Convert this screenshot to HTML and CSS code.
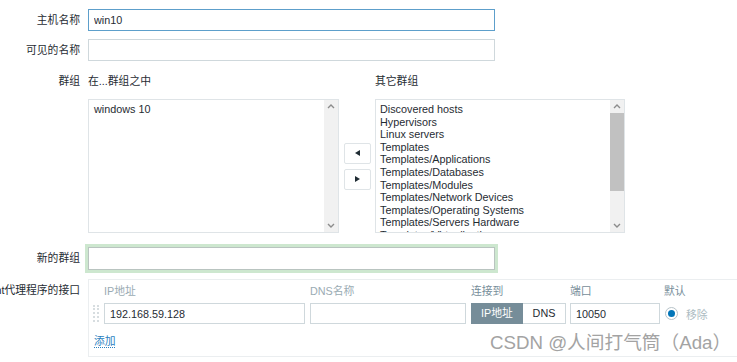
FILE: index.html
```html
<!DOCTYPE html>
<html lang="zh-CN">
<head>
    <meta charset="UTF-8">
    <meta name="viewport" content="width=device-width, initial-scale=1.0">
    <title>主机</title>
    <link rel="stylesheet" href="styles.css">
</head>
<body>
    <div class="form">
        <div class="row row-name">
            <div class="lbl">主机名称</div>
            <input class="text wide focus" type="text" value="win10">
        </div>

        <div class="row row-visible">
            <div class="lbl">可见的名称</div>
            <input class="text wide" type="text" value="">
        </div>

        <div class="row row-groups">
            <div class="lbl lbl-short">群组</div>
            <div class="groups">
                <div class="group-head">在...群组之中</div>
                <div></div>
                <div class="group-head">其它群组</div>

                <div class="list">
                    <div class="list-body list-in">
                        <div>windows 10</div>
                    </div>
                    <div class="sbar">
                        <div class="sbar-btn"><svg width="8" height="5" viewBox="0 0 8 5"><polyline points="1,4 4,1 7,4" fill="none" stroke="#8c8c8c" stroke-width="1.4"/></svg></div>
                        <div class="sbar-track"></div>
                        <div class="sbar-btn"><svg width="8" height="5" viewBox="0 0 8 5"><polyline points="1,1 4,4 7,1" fill="none" stroke="#8c8c8c" stroke-width="1.4"/></svg></div>
                    </div>
                </div>

                <div class="move-btns">
                    <button class="move"><span class="tri tri-left"></span></button>
                    <button class="move"><span class="tri tri-right"></span></button>
                </div>

                <div class="list">
                    <div class="list-body">
                        <div>Discovered hosts</div>
                        <div>Hypervisors</div>
                        <div>Linux servers</div>
                        <div>Templates</div>
                        <div>Templates/Applications</div>
                        <div>Templates/Databases</div>
                        <div>Templates/Modules</div>
                        <div>Templates/Network Devices</div>
                        <div>Templates/Operating Systems</div>
                        <div>Templates/Servers Hardware</div>
                        <div>Templates/Virtualization</div>
                    </div>
                    <div class="sbar">
                        <div class="sbar-btn"><svg width="8" height="5" viewBox="0 0 8 5"><polyline points="1,4 4,1 7,4" fill="none" stroke="#8c8c8c" stroke-width="1.4"/></svg></div>
                        <div class="sbar-track"><div class="sbar-thumb"></div></div>
                        <div class="sbar-btn"><svg width="8" height="5" viewBox="0 0 8 5"><polyline points="1,1 4,4 7,1" fill="none" stroke="#8c8c8c" stroke-width="1.4"/></svg></div>
                    </div>
                </div>
            </div>
        </div>

        <div class="row row-new">
            <div class="lbl">新的群组</div>
            <input class="text new-group" type="text" value="">
        </div>

        <div class="row row-iface">
            <div class="lbl">Agent代理程序的接口</div>
            <div class="iface">
                <div class="iface-grid">
                    <div></div>
                    <div class="col-head light">IP地址</div>
                    <div class="col-head light">DNS名称</div>
                    <div class="col-head">连接到</div>
                    <div class="col-head">端口</div>
                    <div class="col-head">默认</div>

                    <div class="drag"></div>
                    <div><input class="text ip" type="text" value="192.168.59.128"></div>
                    <div><input class="text dns" type="text" value=""></div>
                    <div class="toggle">
                        <span class="tg tg-on">IP地址</span><span class="tg">DNS</span>
                    </div>
                    <div><input class="text port" type="text" value="10050"></div>
                    <div class="default-cell">
                        <span class="radio"><span class="radio-dot"></span></span>
                        <span class="remove">移除</span>
                    </div>
                </div>
                <div class="add">添加</div>
            </div>
        </div>
    </div>

    <div class="watermark">CSDN @人间打气筒（Ada）</div>
</body>
</html>
```

FILE: styles.css
```css
body {
    margin: 0;
    font-family: "Liberation Sans", "Noto Sans CJK SC", sans-serif;
    font-size: 10.8px;
    color: #1f2c33;
    background-color: #fff;
    overflow: hidden;
}

.form {
    padding-top: 9px;
}

.row {
    display: flex;
    align-items: flex-start;
}

.lbl {
    width: 80px;
    flex: none;
    padding-right: 8px;
    display: flex;
    justify-content: flex-end;
    white-space: nowrap;
    line-height: 22px;
}

.text {
    box-sizing: border-box;
    height: 22px;
    margin: 0;
    padding: 0 5px;
    border: 1px solid #cfd8dc;
    border-radius: 0;
    font-family: inherit;
    font-size: 10.8px;
    color: #1f2c33;
    background-color: #fff;
    outline: none;
}

.wide {
    width: 407px;
}

.focus {
    border-color: #5d9fcb;
}

.row-name {
    margin-bottom: 8px;
}

.row-visible {
    margin-bottom: 11px;
}

/* 群组 */
.lbl-short {
    line-height: 18px;
}

.groups {
    display: grid;
    grid-template-columns: 251px 36px 250px;
    grid-template-rows: 18px 134px;
    row-gap: 9px;
}

.group-head {
    line-height: 18px;
}

.list {
    display: flex;
    border: 1px solid #dfe4e7;
    overflow: hidden;
}

.list-body {
    flex: 1;
    padding: 3px 4px 0 4px;
    line-height: 12.6px;
    overflow: hidden;
    white-space: nowrap;
}

.list-in {
    padding-left: 5px;
}

.sbar {
    flex: none;
    width: 14px;
    display: flex;
    flex-direction: column;
    background-color: #f1f1f1;
}

.sbar-btn {
    height: 13px;
    display: flex;
    align-items: center;
    justify-content: center;
}

.sbar-track {
    flex: 1;
}

.sbar-thumb {
    height: 78px;
    background-color: #c1c1c1;
}

.move-btns {
    display: flex;
    flex-direction: column;
    justify-content: center;
    gap: 5px;
    padding-left: 5px;
}

.move {
    width: 27px;
    height: 21px;
    padding: 0;
    border: 1px solid #dfe4e7;
    border-radius: 2px;
    background-color: #fff;
    display: flex;
    align-items: center;
    justify-content: center;
}

.tri {
    width: 0;
    height: 0;
    border-top: 3.5px solid transparent;
    border-bottom: 3.5px solid transparent;
}

.tri-left {
    border-right: 5px solid #1f2c33;
}

.tri-right {
    border-left: 5px solid #1f2c33;
}

/* 新的群组 */
.row-new {
    margin-top: 14px;
}

.new-group {
    width: 407px;
    height: 23px;
    border-color: #b9c4c0;
    box-shadow: 0 0 0 3px #cde7cf;
}

/* 接口 */
.row-iface {
    margin-top: 9px;
}

.iface {
    width: 700px;
    border: 1px solid #ebeef0;
    border-right: none;
    padding: 4px 0 8px 4px;
}

.iface-grid {
    display: grid;
    grid-template-columns: 11px 206px 161px 99px 94px auto;
    grid-template-rows: 14px 21px;
    row-gap: 5px;
}

.col-head {
    line-height: 14px;
    color: #768d99;
}

.col-head.light {
    color: #9aabb3;
}

.drag {
    margin-top: 2px;
    width: 2px;
    height: 17px;
    border-left: 2px dotted #d7dde0;
    border-right: 2px dotted #d7dde0;
}

.ip {
    width: 201px;
    height: 21px;
}

.dns {
    width: 156px;
    height: 21px;
}

.port {
    width: 90px;
    height: 21px;
}

.toggle {
    display: flex;
    width: 95px;
}

.tg {
    box-sizing: border-box;
    height: 21px;
    line-height: 19px;
    border: 1px solid #cfd8dc;
    border-left: none;
    text-align: center;
    width: 43px;
    background-color: #fff;
}

.tg-on {
    width: 52px;
    border: 1px solid #768d99;
    background-color: #768d99;
    color: #fff;
}

.default-cell {
    display: flex;
    align-items: center;
}

.radio {
    box-sizing: border-box;
    width: 13px;
    height: 13px;
    margin-left: 1px;
    border: 1px solid #b7c3c9;
    border-radius: 50%;
    display: flex;
    align-items: center;
    justify-content: center;
}

.radio-dot {
    width: 7px;
    height: 7px;
    border-radius: 50%;
    background-color: #0275b8;
}

.remove {
    margin-left: 8px;
    color: #acbbc2;
}

.add {
    margin: 10px 0 0 1px;
    line-height: 14px;
    color: #2b7fbf;
    text-decoration: underline dotted;
    text-underline-offset: 2px;
    width: max-content;
}

.watermark {
    position: absolute;
    left: 490px;
    top: 331px;
    font-size: 18.7px;
    line-height: 24px;
    color: #a3a3a3;
    white-space: nowrap;
}
```
